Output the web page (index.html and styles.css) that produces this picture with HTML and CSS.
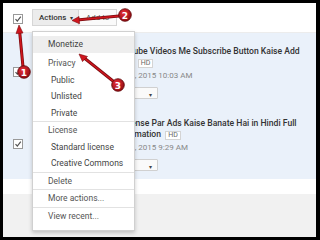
FILE: index.html
```html
<!DOCTYPE html>
<html lang="en">
  <head>
    <meta charset="UTF-8" />
    <title>Video Manager</title>
    <link rel="stylesheet" href="styles.css">
  </head>
  <body>
    <div class="screen">
      <div class="toolbar">
        <span class="check">
          <svg width="10" height="10" viewBox="0 0 10 10"><rect x="0.5" y="0.5" width="9" height="9" fill="#fff" stroke="#999"/><path d="M2.5 5.2 L4.3 7 L7.8 2.6" fill="none" stroke="#555" stroke-width="1.2"/></svg>
        </span>
        <div class="btn-group">
          <button class="btn btn-actions">Actions <span class="caret">&#9662;</span></button>
          <button class="btn">Add to</button>
        </div>
      </div>

      <div class="rows">
        <div class="row">
          <span class="check">
            <svg width="10" height="10" viewBox="0 0 10 10"><rect x="0.5" y="0.5" width="9" height="9" fill="#fff" stroke="#999"/><path d="M2.5 5.2 L4.3 7 L7.8 2.6" fill="none" stroke="#555" stroke-width="1.2"/></svg>
          </span>
          <div class="thumb"></div>
          <div class="info">
            <div class="title">Youtube Videos Me Subscribe Button Kaise Add Kare <span class="hd">HD</span></div>
            <div class="date">Oct 5, 2015 10:03 AM</div>
            <button class="drop"><span class="caret">&#9662;</span></button>
          </div>
        </div>
        <div class="row">
          <span class="check">
            <svg width="10" height="10" viewBox="0 0 10 10"><rect x="0.5" y="0.5" width="9" height="9" fill="#fff" stroke="#999"/><path d="M2.5 5.2 L4.3 7 L7.8 2.6" fill="none" stroke="#555" stroke-width="1.2"/></svg>
          </span>
          <div class="thumb"></div>
          <div class="info">
            <div class="title">Adsense Par Ads Kaise Banate Hai in Hindi Full Information <span class="hd">HD</span></div>
            <div class="date">Oct 3, 2015 9:29 AM</div>
            <button class="drop"><span class="caret">&#9662;</span></button>
          </div>
        </div>
      </div>
      <div class="gap"></div>
      <div class="footer"></div>

      <ul class="menu">
        <li class="item active">Monetize</li>
        <li class="item head first">Privacy</li>
        <li class="item sub">Public</li>
        <li class="item sub">Unlisted</li>
        <li class="item sub">Private</li>
        <li class="sep"></li>
        <li class="item head">License</li>
        <li class="item sub">Standard license</li>
        <li class="item sub">Creative Commons</li>
        <li class="sep"></li>
        <li class="item">Delete</li>
        <li class="sep"></li>
        <li class="item">More actions...</li>
        <li class="sep"></li>
        <li class="item">View recent...</li>
      </ul>

      <!-- tutorial markers drawn over the page -->
      <svg class="notes" width="313" height="234" viewBox="0 0 313 234">
        <defs>
          <radialGradient id="dot" cx="40%" cy="35%" r="70%">
            <stop offset="0" stop-color="#e8303a"/>
            <stop offset="1" stop-color="#8e0a10"/>
          </radialGradient>
        </defs>
        <g stroke="#7a0a0e" stroke-width="3" fill="none" stroke-linecap="round">
          <path d="M20 64 L16.5 27"/>
          <path d="M116 13 L74 17"/>
          <path d="M110 78 L80 54"/>
        </g>
        <g stroke="#d0161e" stroke-width="1.6" fill="none" stroke-linecap="round">
          <path d="M20 64 L16.5 27"/>
          <path d="M116 13 L74 17"/>
          <path d="M110 78 L80 54"/>
        </g>
        <g fill="#d0161e" stroke="#7a0a0e" stroke-width="0.6">
          <path d="M16 22 L20 30 L13 30.6 Z"/>
          <path d="M69 17.5 L76 13.5 L76.6 20.8 Z"/>
          <path d="M76 51 L84.5 53.5 L79.5 58.6 Z"/>
        </g>
        <g stroke="#5a0508" stroke-width="0.8">
          <circle cx="21" cy="69" r="6.3" fill="url(#dot)"/>
          <circle cx="122" cy="12" r="6.3" fill="url(#dot)"/>
          <circle cx="115" cy="82" r="6.3" fill="url(#dot)"/>
        </g>
        <g class="num" fill="#fff" text-anchor="middle">
          <text x="21" y="72.5">1</text>
          <text x="122" y="15.5">2</text>
          <text x="115" y="85.5">3</text>
        </g>
      </svg>
    </div>
  </body>
</html>
```

FILE: styles.css
```css
html {
  background: #000;
}
body {
  margin: 0;
  padding: 3px 0 0 3px;
  font-family: Roboto, "Liberation Sans", Arial, sans-serif;
}
.screen {
  position: relative;
  width: 313px;
  height: 234px;
  background: #f1f1f1;
  overflow: hidden;
  display: flex;
  flex-direction: column;
}
.check {
  display: block;
  width: 10px;
  height: 10px;
  line-height: 0;
}
.toolbar {
  background: #fff;
  height: 30px;
  display: flex;
  align-items: center;
  padding: 0 0 0 10px;
  gap: 9px;
  border-bottom: 1px solid #ececec;
  box-sizing: border-box;
}
.toolbar .check {
  margin-top: 3px;
}
.btn-group {
  display: flex;
}
.btn {
  font-family: inherit;
  font-size: 8px;
  color: #555;
  background: #fafafa;
  border: 1px solid #d6d6d6;
  height: 17px;
  padding: 0 7px;
  margin: 0;
  border-radius: 0;
}
.btn-actions {
  background: #ececec;
  color: #333;
  font-weight: 500;
  border-right: none;
  width: 46px;
  padding: 0 0 0 6px;
  text-align: left;
}
.caret {
  font-size: 6px;
  margin-left: 2px;
}
.rows {
  background: #eaf1fa;
  height: 146px;
}
.row {
  display: flex;
  height: 72px;
  box-sizing: border-box;
  padding: 13px 0 0 10px;
}
.row .check {
  margin-top: 21px;
}
.thumb {
  width: 70px;
  height: 40px;
  margin: 2px 0 0 13px;
  background: #ccc;
}
.info {
  width: 199px;
  margin-left: 10px;
}
.title {
  font-size: 8.6px;
  font-weight: 500;
  line-height: 11px;
  color: #333;
}
.hd {
  display: inline-block;
  font-size: 7px;
  font-weight: 400;
  color: #666;
  line-height: 7px;
  padding: 0 2px;
  border: 1px solid #d4d4d4;
  background: #fff;
  margin-left: 2px;
  vertical-align: 0;
}
.date {
  font-size: 8px;
  color: #888;
  line-height: 13px;
  margin-top: 1px;
}
.drop {
  display: block;
  font-family: inherit;
  color: #444;
  height: 12px;
  width: 42px;
  margin-top: 5px;
  padding: 0 5px 0 0;
  text-align: right;
  line-height: 10px;
  background: #fafafa;
  border: 1px solid #d0d0d0;
  border-radius: 1px;
}
.gap {
  background: #fff;
  height: 15px;
}
.footer {
  flex: 1;
  background: #f1f1f1;
}

.menu {
  position: absolute;
  left: 29px;
  top: 28px;
  width: 101px;
  margin: 0;
  padding: 4px 0 6px;
  list-style: none;
  background: #fff;
  border: 1px solid #d0d0d0;
  box-shadow: 0 2px 4px rgba(0, 0, 0, 0.2);
  font-size: 8.5px;
  color: #555;
}
.item {
  height: 16.5px;
  line-height: 16.5px;
  padding-left: 15px;
  white-space: nowrap;
}
.item.active {
  height: 17px;
  line-height: 17px;
  background: #eee;
  color: #444;
}
.item.first {
  margin-top: 2px;
}
.item.sub {
  padding-left: 18px;
  color: #444;
}
.sep {
  height: 1px;
  background: #e2e2e2;
}

.notes {
  position: absolute;
  left: 0;
  top: 0;
  pointer-events: none;
}
.num {
  font-family: "DejaVu Sans", sans-serif;
  font-size: 9px;
  font-weight: bold;
}
```
